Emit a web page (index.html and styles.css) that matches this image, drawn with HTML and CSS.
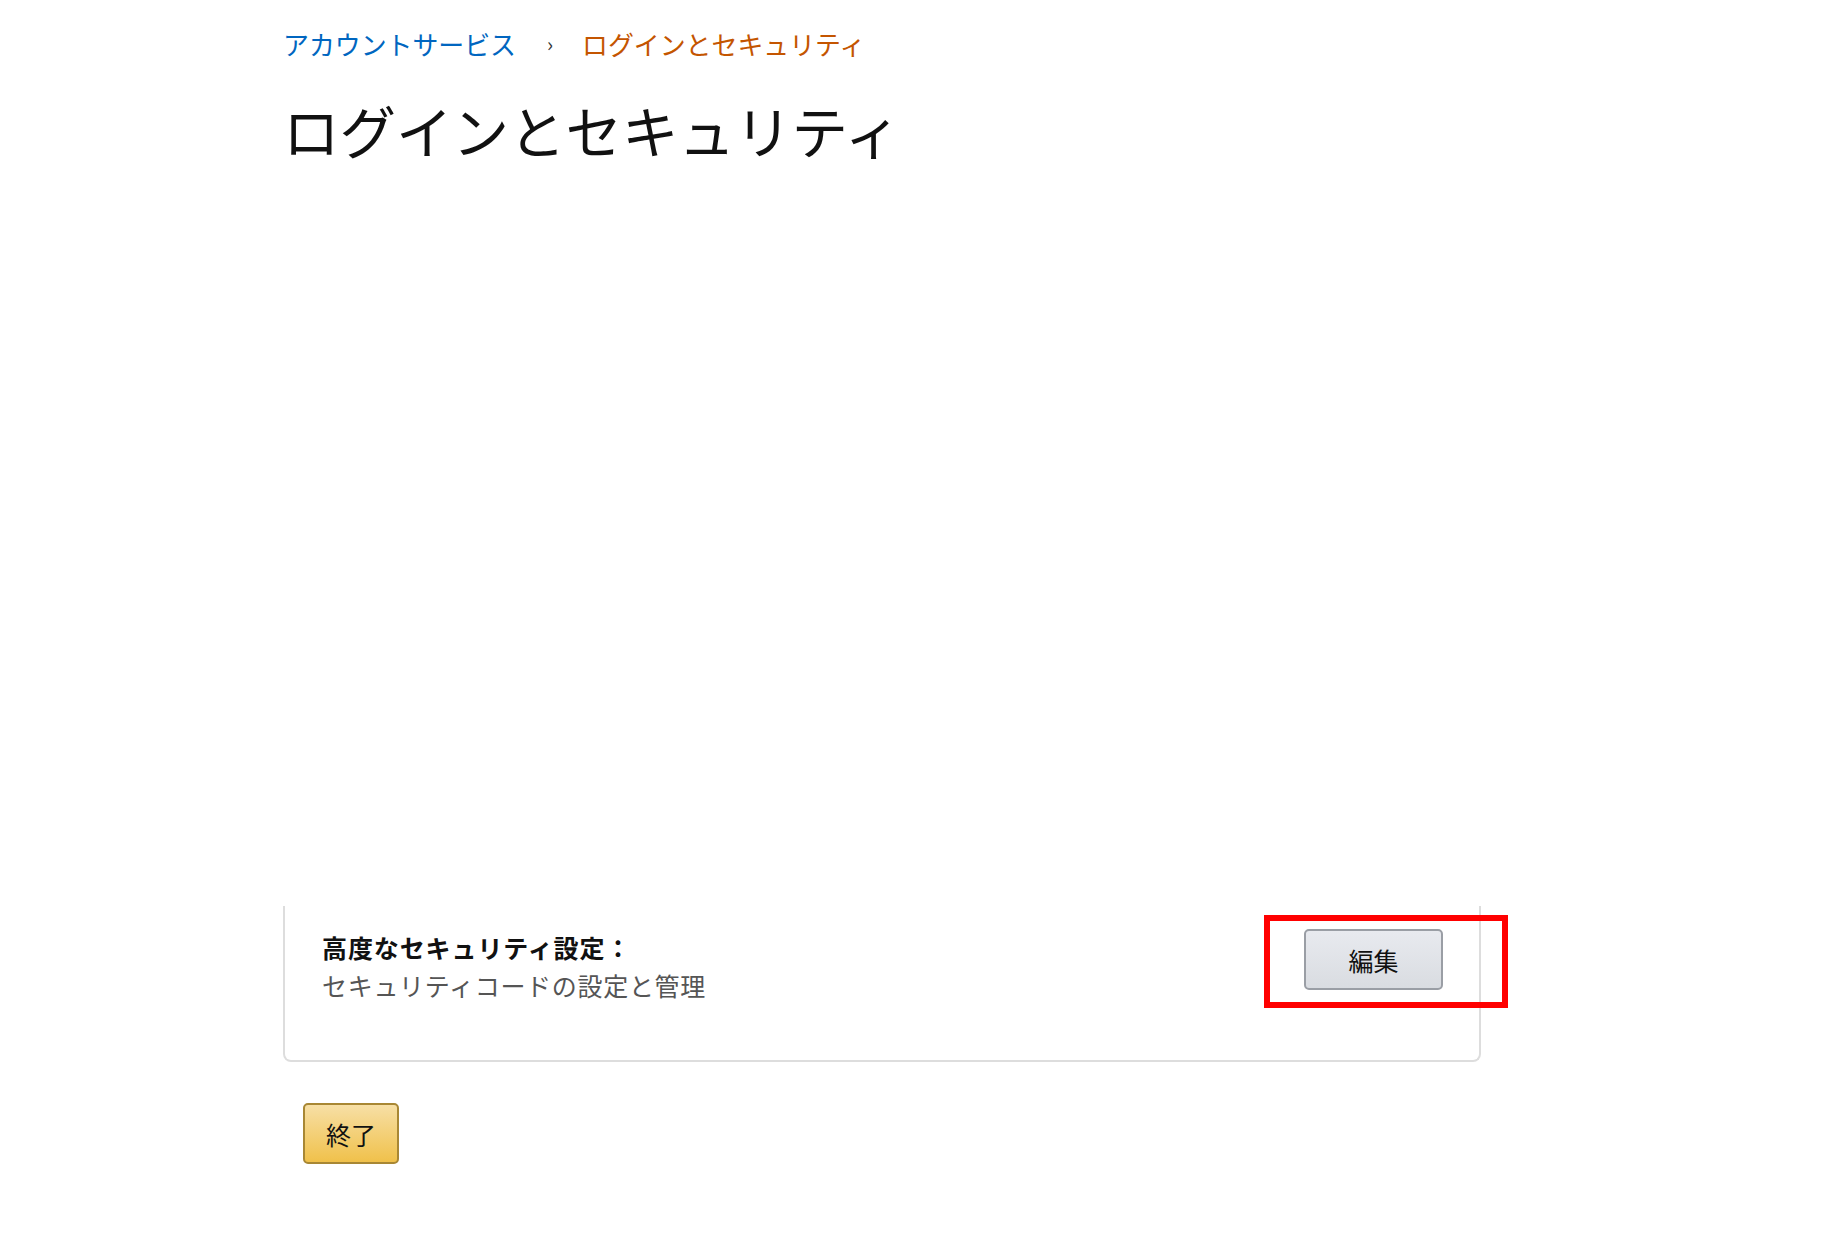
FILE: index.html
```html
<!DOCTYPE html>
<html lang="ja">
<head>
<meta charset="utf-8">
<title>ログインとセキュリティ</title>
<link rel="stylesheet" href="styles.css">
</head>
<body>
<div class="page">
  <nav class="breadcrumb">
    <a class="crumb-link" href="#">アカウントサービス</a>
    <span class="crumb-sep">›</span>
    <span class="crumb-current">ログインとセキュリティ</span>
  </nav>
  <h1 class="title">ログインとセキュリティ</h1>
  <div class="spacer"></div>
  <div class="card">
    <div class="card-text">
      <div class="card-heading">高度なセキュリティ設定：</div>
      <div class="card-desc">セキュリティコードの設定と管理</div>
    </div>
    <button class="btn btn-edit">編集</button>
    <div class="highlight"></div>
  </div>
  <button class="btn btn-done">終了</button>
</div>
</body>
</html>
```

FILE: styles.css
```css
html, body {
  margin: 0;
  padding: 0;
  background: #ffffff;
}
body {
  font-family: "Noto Sans CJK JP", "Noto Sans", sans-serif;
  color: #111111;
}
.page {
  margin-left: 283px;
  width: 1198px;
  padding-top: 27px;
}
.breadcrumb {
  display: flex;
  align-items: center;
  font-size: 25.9px;
  line-height: 34px;
  height: 34px;
}
.crumb-link {
  color: #0066c0;
  text-decoration: none;
}
.crumb-sep {
  color: #333;
  font-size: 20px;
  margin: 0 29px 0 31px;
}
.crumb-current {
  color: #c45500;
}
.title {
  margin: 33px 0 0 0;
  font-size: 56.5px;
  font-weight: 400;
  line-height: 70px;
  color: #111;
}
.spacer {
  height: 742px;
}
.card {
  position: relative;
  box-sizing: border-box;
  height: 156px;
  border: 2px solid #dddddd;
  border-top: none;
  border-radius: 0 0 8px 8px;
  padding: 22px 36px 0 37px;
  display: flex;
  justify-content: space-between;
  align-items: flex-start;
}
.card-heading {
  font-size: 25px;
  font-weight: 700;
  letter-spacing: 0.9px;
  line-height: 38px;
  color: #111;
}
.card-desc {
  font-size: 25px;
  letter-spacing: 0.7px;
  line-height: 38px;
  color: #555555;
}
.btn {
  font-family: "Noto Sans CJK JP", "Noto Sans", sans-serif;
  font-size: 25px;
  color: #111;
  box-sizing: border-box;
  height: 61px;
  border-radius: 5px;
  padding: 0;
  cursor: pointer;
}
.btn-edit {
  width: 139px;
  margin-top: 1px;
  border: 2px solid #9a9ea5;
  background: linear-gradient(#e8eaef, #d9dce1);
}
.btn-done {
  width: 96px;
  margin: 41px 0 0 20px;
  border: 2px solid #a88734;
  background: linear-gradient(#f7dfa5, #f0c14b);
}
.highlight {
  position: absolute;
  top: 9px;
  right: -29px;
  width: 244px;
  height: 93px;
  box-sizing: border-box;
  border: 6px solid #ff0000;
  pointer-events: none;
}
```
